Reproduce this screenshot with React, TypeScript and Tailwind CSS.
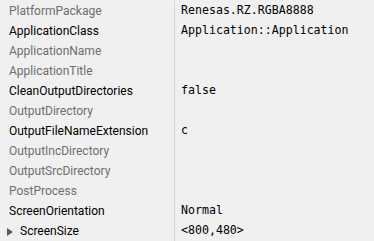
const rows: { label: string; value?: string; set?: boolean; expand?: boolean }[] = [
  { label: "PlatformPackage", value: "Renesas.RZ.RGBA8888" },
  { label: "ApplicationClass", value: "Application::Application", set: true },
  { label: "ApplicationName" },
  { label: "ApplicationTitle" },
  { label: "CleanOutputDirectories", value: "false", set: true },
  { label: "OutputDirectory" },
  { label: "OutputFileNameExtension", value: "c", set: true },
  { label: "OutputIncDirectory" },
  { label: "OutputSrcDirectory" },
  { label: "PostProcess" },
  { label: "ScreenOrientation", value: "Normal", set: true },
  { label: "ScreenSize", value: "<800,480>", set: true, expand: true },
]

export default function App() {
  return (
    <div className="w-[374px] h-[241px] bg-[#f0f0f0] overflow-hidden pt-px">
      {rows.map((row) => (
        <div key={row.label} className="flex h-5 items-center">
          <div className="w-[175px] h-full flex items-center border-r border-[#d6d6d6] pl-[9px] relative">
            {row.expand && (
              <svg className="absolute left-[7px] top-[7px]" width="6" height="8" viewBox="0 0 6 8">
                <path d="M0 0 L6 4 L0 8 Z" fill="#5a5a5a" />
              </svg>
            )}
            <span
              className={
                "text-[12px] font-['Roboto',sans-serif] " +
                (row.expand ? "pl-[11px] " : "") +
                (row.set ? "text-[#000000]" : "text-[#6e6e6e]")
              }
            >
              {row.label}
            </span>
          </div>
          <div className="pl-[6px] text-[11.6px] text-black font-['DejaVu_Sans_Mono',monospace]">{row.value}</div>
        </div>
      ))}
    </div>
  )
}
